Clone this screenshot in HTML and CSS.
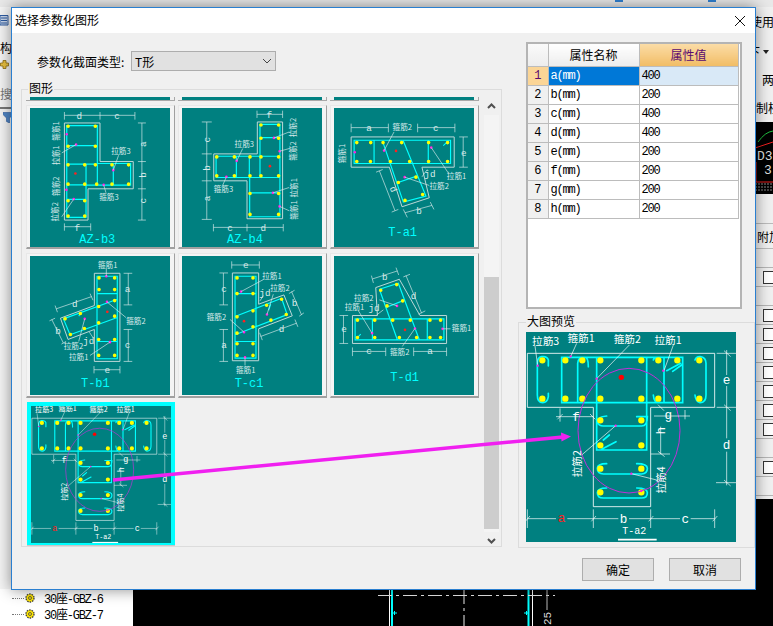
FILE: index.html
```html
<!DOCTYPE html>
<html lang="zh">
<head>
<meta charset="utf-8">
<title>选择参数化图形</title>
<link rel="stylesheet" href="styles.css">
</head>
<body>
<div class="app">
  <div class="topstrip"><i class="tb tb-a"></i><i class="tb tb-b"></i></div>
  <div class="workspace">
    <aside class="tree">
      <div class="scrap scrap-icon"><svg width="9" height="12" viewBox="0 0 9 12"><path class="ico-doc" d="M0 1.500H8V11H0Z"/><path class="ico-ln" d="M1 4H7M1 6.500H7M1 9H7"/></svg></div>
      <div class="scrap scrap-gou">构件</div>
      <div class="scrap scrap-plus"><svg width="9" height="9" viewBox="0 0 9 9"><path class="ico-plus" d="M3 .5H6V3H8.500V6H6V8.500H3V6H.5V3H3Z"/></svg></div>
      <div class="scrap scrap-sou">搜索</div>
      <div class="scrap scrap-rule"></div>
      <div class="scrap scrap-fun"><svg width="10" height="11" viewBox="0 0 10 11"><path class="ico-fun" d="M0 .5H10V2.500L6.500 6V11L3.500 9.500V6L0 2.500Z"/></svg></div>
      <div class="tree-items">
        <div class="tree-item"><i class="branch"></i><svg class="gear" width="10" height="10" viewBox="0 0 10 10"><circle class="gear-o" cx="5" cy="5" r="4"/><circle class="gear-i" cx="5" cy="5" r="1.500"/></svg><span>30座-GBZ-6</span></div>
        <div class="tree-item"><i class="branch"></i><svg class="gear" width="10" height="10" viewBox="0 0 10 10"><circle class="gear-o" cx="5" cy="5" r="4"/><circle class="gear-i" cx="5" cy="5" r="1.500"/></svg><span>30座-GBZ-7</span></div>
      </div>
    </aside>
    <main class="cad">
      <svg width="622" height="619" viewBox="133 7 622 619">
        <path class="cad-w" d="M389.500 590V626M532.500 590V626"/>
        <path class="cad-c" d="M392 590V626M528.500 590V626"/>
        <path class="cad-d" d="M378 595.500H555M464 590V626"/>
        <path class="cad-c1" d="M392 613H397M394.500 611V615M524 613H529M526.500 611V615"/>
        <path class="cad-g" d="M547 590V610"/>
        <text class="cad-t" transform="rotate(-90 551 625)" x="551" y="625">25</text>
      </svg>
    </main>
    <aside class="side">
      <div class="side-txt side-a">使用</div>
      <div class="side-txt side-b">下<i class="caret"></i></div>
      <div class="side-txt side-c">两</div>
      <div class="side-txt side-d">制柱</div>
      <div class="side-img"><svg width="18" height="72" viewBox="0 0 18 72"><path class="cad-r" d="M0 26L18 20M0 60H18M1 40V60"/><path class="cad-gn" d="M3 20Q10 10 18 9"/><path class="cad-n" d="M0 62H18M0 65H18M0 68H18"/><text class="side-cad" x="2" y="38">D3</text><text class="side-cad" x="9" y="52">3</text></svg></div>
      <div class="side-row side-tall"></div>
      <div class="side-txt side-e">附加</div>
      <div class="side-row"></div>
      <div class="side-row"><i class="chk"></i></div>
      <div class="side-row"></div>
      <div class="side-row"><i class="chk"></i></div>
      <div class="side-row"><i class="chk"></i></div>
      <div class="side-row"><i class="chk"></i></div>
      <div class="side-row"><i class="chk"></i></div>
      <div class="side-row"><i class="chk"></i></div>
      <div class="side-row"><i class="chk"></i></div>
      <div class="side-row"><i class="chk"></i></div>
      <div class="side-row"></div>
      <div class="side-row"><i class="chk"></i></div>
      <div class="side-row"></div>
    </aside>
  </div>
</div>

<section class="dialog">
  <header class="titlebar">
    <h1 class="title">选择参数化图形</h1>
    <svg class="close" width="12" height="12" viewBox="0 0 12 12"><path d="M1 1L11 11M11 1L1 11"/></svg>
  </header>
  <div class="body">
    <div class="leftcol">
      <div class="typerow">
        <span class="typelabel">参数化截面类型:</span>
        <div class="combo"><span>T形</span><svg width="10" height="6" viewBox="0 0 10 6"><path d="M1 1L5 5L9 1"/></svg></div>
      </div>
      <div class="group group-shapes">
        <div class="legend">图形</div>
        <div class="listwrap">
          <div class="thumbs">
            <div class="stub"><i></i></div><div class="stub"><i></i></div><div class="stub"><i></i></div>

            <div class="card"><svg class="pic" viewBox="90 323 420 418">
              <path class="ol" d="M193 368H300V484H400V566H264V660H193Z"/>
              <path class="rb" d="M200 376H292V490H392V555H258V652H200ZM200 436H292M200 492H292M200 554H258M258 492V554M292 492V554M340 492V554M200 598H258"/>
              <path class="dy" d="M204 378h0M286 378h0M204 438h0M286 438h0M204 494h0M254 494h0M286 494h0M336 494h0M386 494h0M204 552h0M254 552h0M290 552h0M336 552h0M386 552h0M204 602h0M254 602h0M204 648h0M254 648h0"/>
              <path class="dp" d="M200 402h0M228 433h0M340 510h0M311 554h0M199 569h0M221 597h0"/>
              <path class="dr" d="M226 520h0"/>
              <path class="dm" d="M193 345H405M193 335V358M300 335V358M405 335V358M426 368V660M414 368H438M414 484H438M414 566H438M414 660H438M193 680H272M193 670V692M272 670V692M228 433L185 458M340 510L356 465M311 554L318 578M221 597L185 650"/>
              <text class="lt" x="238" y="356">d</text><text class="lt" x="351" y="356">c</text><text class="lt" x="232" y="692">f</text>
              <text class="lt" transform="rotate(-90 437 432)" x="437" y="432">a</text><text class="lt" transform="rotate(-90 437 524)" x="437" y="524">b</text><text class="lt" transform="rotate(-90 437 602)" x="437" y="602">c</text>
              <text class="lb" x="363" y="462">拉筋3</text><text class="lb" x="327" y="600">箍筋3</text>
              <text class="lb" transform="rotate(-90 178 392)" x="178" y="392">箍筋1</text><text class="lb" transform="rotate(-90 178 465)" x="178" y="465">拉筋1</text><text class="lb" transform="rotate(-90 178 558)" x="178" y="558">箍筋2</text><text class="lb" transform="rotate(-90 174 635)" x="174" y="635">拉筋2</text>
              <text class="ti" x="292" y="730">AZ-b3</text>
            </svg></div>

            <div class="card"><svg class="pic" viewBox="546 323 420 418">
              <path class="ol" d="M772 365H848V656H741V542H641V461H772Z"/>
              <path class="rb" d="M780 372H840V650H749V532H648V468H780ZM780 412H840M780 468H840M749 532H840M709 468V532M748 468V532M780 468V532M749 578H840"/>
              <path class="dy" d="M783 374h0M836 374h0M783 414h0M836 414h0M650 470h0M703 470h0M750 470h0M783 470h0M836 470h0M650 527h0M703 527h0M750 527h0M783 527h0M836 527h0M750 580h0M836 580h0M750 643h0M836 643h0"/>
              <path class="dp" d="M822 413h0M839 453h0M710 482h0M679 530h0M819 578h0M839 619h0"/>
              <path class="dr" d="M810 498h0"/>
              <path class="dm" d="M771 342H848M771 331V353M848 331V353M620 365V658M605 365H635M605 461H635M605 542H635M605 658H635M640 682H850M640 672V694M741 672V694M850 672V694M822 413L868 395M839 453L868 445M710 482L728 445M679 530L668 555M819 578L868 562M839 619L868 632"/>
              <text class="lt" x="808" y="352">f</text><text class="lt" x="690" y="692">c</text><text class="lt" x="790" y="692">d</text>
              <text class="lt" transform="rotate(-90 631 418)" x="631" y="418">c</text><text class="lt" transform="rotate(-90 631 503)" x="631" y="503">b</text><text class="lt" transform="rotate(-90 631 595)" x="631" y="595">a</text>
              <text class="lb" x="733" y="440">拉筋3</text><text class="lb" x="670" y="576">箍筋3</text>
              <text class="lb" transform="rotate(-90 888 382)" x="888" y="382">拉筋2</text><text class="lb" transform="rotate(-90 888 452)" x="888" y="452">箍筋2</text><text class="lb" transform="rotate(-90 891 563)" x="891" y="563">拉筋1</text><text class="lb" transform="rotate(-90 891 630)" x="891" y="630">箍筋1</text>
              <text class="ti" x="735" y="730">AZ-b4</text>
            </svg></div>

            <div class="card"><svg class="pic" viewBox="42 323 420 418">
              <path class="ol" d="M93 410H403V501H306L328 593L246 620L208 501H93Z"/>
              <path class="rb" d="M102 420H392V490H102ZM162 420V490M325 420V490M250 422L318 588L250 606L188 424M232 548L290 528M370 436L386 422"/>
              <path class="dy" d="M110 427h0M152 427h0M189 427h0M245 427h0M326 427h0M383 427h0M110 484h0M151 484h0M211 484h0M269 484h0M326 484h0M383 484h0M235 547h0M288 531h0M255 601h0M308 583h0"/>
              <path class="dp" d="M104 456h0M192 451h0M334 442h0M254 531h0"/>
              <path class="dr" d="M228 452h0"/>
              <path class="dm" d="M93 382H205M93 370V396M205 370V396M293 382H405M293 370V396M405 370V396M430 410V501M418 410H444M418 501H444M178 512L225 632M168 516L188 508M215 636L235 628M255 638L336 616M250 628L262 652M331 606L342 628M192 451L222 395M334 442L385 518M254 531L328 556M306 530L322 508"/>
              <text class="lt" x="147" y="392">a</text><text class="lt" x="348" y="392">c</text><text class="lt" x="432" y="466">e</text><text class="lt" x="330" y="532">jd</text><text class="lt" x="297" y="642">b</text>
              <text class="lt" transform="rotate(68 204 574)" x="204" y="566">d</text>
              <text class="lb" x="247" y="388">箍筋2</text><text class="lb" x="410" y="536">拉筋1</text><text class="lb" x="358" y="568">拉筋2</text>
              <text class="lb" transform="rotate(-90 76 460)" x="76" y="460">箍筋1</text>
              <text class="ti" x="248" y="708">T-a1</text>
            </svg></div>

            <div class="card"><svg class="pic" viewBox="90 33 420 418">
              <path class="ol" d="M283 85H360V350H283V254L204 284L181 220L283 182Z"/>
              <path class="rb" d="M291 94H352V342H291ZM291 146H352M291 290H352M190 222L352 163M210 270L352 218M190 222L210 270M246 200L236 214"/>
              <path class="dy" d="M297 99h0M344 99h0M297 134h0M344 134h0M344 167h0M296 185h0M241 206h0M195 222h0M344 214h0M296 234h0M253 251h0M211 269h0M296 284h0M344 284h0M296 332h0M344 332h0"/>
              <path class="dp" d="M319 94h0M321 171h0M254 222h0M330 292h0"/>
              <path class="dr" d="M322 201h0"/>
              <path class="dm" d="M385 85V180M385 254V350M371 85H397M371 180H397M371 254H397M371 350H397M282 375H360M282 364V386M360 364V386M168 192L275 155M165 182L172 202M270 146L279 166M155 224L190 295M148 228L165 220M184 298L198 290M319 94V72M321 171L378 218M254 222L236 290M330 292L270 332M268 262L280 280"/>
              <text class="lt" x="383" y="142">a</text><text class="lt" x="383" y="311">c</text><text class="lt" x="322" y="384">e</text><text class="lt" x="224" y="186">d</text><text class="lt" x="174" y="268">b</text><text class="lt" x="266" y="297">jd</text>
              <text class="lb" x="323" y="70">箍筋1</text><text class="lb" x="408" y="237">箍筋2</text><text class="lb" x="220" y="313">拉筋2</text><text class="lb" x="236" y="347">拉筋1</text>
              <text class="ti" x="286" y="427">T-b1</text>
            </svg></div>

            <div class="card"><svg class="pic" viewBox="546 33 420 418">
              <path class="ol" d="M697 84H776V178L852 150L877 213L776 252V348H697Z"/>
              <path class="rb" d="M705 94H768V340H705ZM705 146H768M705 290H768M705 215L845 160M705 270L860 210M845 160L862 210M812 178L806 196"/>
              <path class="dy" d="M711 99h0M759 99h0M711 146h0M759 146h0M711 216h0M759 198h0M800 181h0M845 163h0M711 265h0M759 246h0M813 226h0M859 209h0M711 297h0M759 297h0M711 332h0M759 332h0"/>
              <path class="dp" d="M723 140h0M801 209h0M732 262h0M735 338h0"/>
              <path class="dr" d="M732 229h0"/>
              <path class="dm" d="M695 60H778M695 49V71M778 49V71M670 84V180M670 254V350M658 84H684M658 180H684M658 254H684M658 350H684M875 140L905 210M867 146L884 136M898 214L912 204M782 275L890 235M779 264L787 286M885 224L894 246M723 140L790 104M801 209L820 148M732 262L690 224M735 338V362M780 168L790 152"/>
              <text class="lt" x="737" y="69">e</text><text class="lt" x="672" y="140">c</text><text class="lt" x="672" y="311">a</text><text class="lt" x="845" y="263">d</text><text class="lt" x="884" y="183">b</text><text class="lt" x="795" y="153">jd</text>
              <text class="lb" x="816" y="103">拉筋1</text><text class="lb" x="840" y="138">拉筋2</text><text class="lb" x="649" y="225">箍筋2</text><text class="lb" x="737" y="384">箍筋1</text>
              <text class="ti" x="747" y="427">T-c1</text>
            </svg></div>

            <div class="card"><svg class="pic" viewBox="42 33 420 418">
              <path class="ol" d="M97 212H172L167 128L238 103L300 212H380V296H97Z"/>
              <path class="rb" d="M105 222H372V285H105ZM157 222V285M322 222V285M178 133L235 115L298 285M178 133L232 285M198 188L255 165M110 280L122 268"/>
              <path class="dy" d="M112 226h0M164 226h0M218 226h0M271 226h0M330 226h0M362 226h0M112 278h0M164 278h0M238 278h0M290 278h0M330 278h0M362 278h0M182 136h0M230 119h0M201 183h0M248 168h0"/>
              <path class="dp" d="M368 252h0M285 251h0M156 265h0M231 183h0"/>
              <path class="dr" d="M255 255h0"/>
              <path class="dm" d="M97 320H197M281 320H380M97 308V334M197 308V334M281 308V334M380 308V334M70 212V296M58 212H84M58 296H84M157 102L232 78M154 92L160 114M228 68L236 90M258 92L305 205M250 96L270 88M296 208L316 198M368 252H392M285 251L247 305M156 265L115 198M231 183L178 165M170 210L190 195"/>
              <text class="lt" x="147" y="329">c</text><text class="lt" x="330" y="329">a</text><text class="lt" x="72" y="263">e</text><text class="lt" x="194" y="104">b</text><text class="lt" x="281" y="161">d</text><text class="lt" x="162" y="199">jd</text>
              <text class="lb" x="131" y="168">拉筋2</text><text class="lb" x="103" y="195">拉筋1</text><text class="lb" x="425" y="259">箍筋1</text><text class="lb" x="239" y="330">箍筋2</text>
              <text class="ti" x="254" y="409">T-d1</text>
            </svg></div>

            <div class="card card-sel"><svg class="pic-sel" viewBox="48 96 630 630"><use href="#ta2" x="48" y="96" width="630" height="630"/></svg></div>
          </div>
          <div class="scrollbar">
            <svg width="9" height="6" viewBox="0 0 9 6"><path d="M1 5L4.500 1.500L8 5"/></svg>
            <div class="track"><div class="thumb"></div></div>
            <svg width="9" height="6" viewBox="0 0 9 6"><path d="M1 1L4.500 4.500L8 1"/></svg>
          </div>
        </div>
      </div>
    </div>

    <div class="rightcol">
      <div class="tablebox">
        <table class="props">
          <colgroup><col class="c-n"><col class="c-k"><col class="c-v"></colgroup>
          <thead><tr><th class="gut"></th><th>属性名称</th><th class="active">属性值</th></tr></thead>
          <tbody>
            <tr class="sel"><td class="gut">1</td><td class="key">a(mm)</td><td class="val">400</td></tr>
            <tr><td class="gut">2</td><td class="key">b(mm)</td><td class="val">200</td></tr>
            <tr><td class="gut">3</td><td class="key">c(mm)</td><td class="val">400</td></tr>
            <tr><td class="gut">4</td><td class="key">d(mm)</td><td class="val">400</td></tr>
            <tr><td class="gut">5</td><td class="key">e(mm)</td><td class="val">200</td></tr>
            <tr><td class="gut">6</td><td class="key">f(mm)</td><td class="val">200</td></tr>
            <tr><td class="gut">7</td><td class="key">g(mm)</td><td class="val">200</td></tr>
            <tr><td class="gut">8</td><td class="key">h(mm)</td><td class="val">200</td></tr>
          </tbody>
        </table>
      </div>
      <div class="group group-preview">
        <div class="legend">大图预览</div>
        <svg class="preview" viewBox="48 96 630 630">
          <symbol id="ta2" viewBox="48 96 630 630">
            <rect class="tealbg" x="48" y="96" width="630" height="630"/>
            <path class="wh" d="M52 160H614V322H422V620H250V322H52Z"/>
            <path class="rbb" d="M100 170Q112 170 115 180V198M98 170H95Q82 172 82 190V285Q82 308 98 308Q112 308 115 290V280M155 308V172H518V308ZM203 308V190Q203 172 225 172Q235 172 235 200M260 172V450H410V172M430 180Q432 172 445 172M462 172V308M430 285Q432 308 445 308M470 212L512 190M488 214L515 195M555 180Q558 170 570 170Q588 172 588 190V285Q588 308 570 308Q557 305 555 285M290 348Q262 350 262 365Q265 378 280 378H395Q412 378 412 350H380M275 448L318 425M280 420L298 405M290 491Q262 491 262 505Q262 522 280 522H395Q412 522 412 505Q412 491 380 491M290 564Q262 564 262 578Q262 594 280 594H395Q412 594 412 578Q412 564 380 564"/>
            <path class="dyb" d="M97 181h0M97 296h0M166 181h0M166 296h0M217 181h0M217 296h0M271 181h0M271 296h0M394 181h0M394 296h0M445 181h0M445 296h0M502 181h0M502 296h0M568 181h0M568 296h0M271 361h0M394 361h0M271 436h0M394 436h0M271 506h0M394 506h0M271 577h0M394 577h0"/>
            <ellipse class="ell" cx="357" cy="392" rx="153" ry="187"/>
            <path class="wt" d="M620 160H678M620 322H678M650 150V225M650 258V415M650 455V556M618 548H678M642 152L662 170M642 314L662 332M642 540L662 558M422 462H480M452 380V462M444 454L464 470M432 348H540M525 330V358M444 314L462 332M138 350H250M150 325V365M142 358L158 342M240 342L256 358M52 656H138M172 656H325M357 656H510M542 656H614M52 628V684M250 628V684M422 628V684M614 628V684M46 664L60 648M244 664L258 648M416 664L430 648M608 664L622 648M75 138L83 197M200 130L182 170M358 135L260 236M490 135L462 212M317 377L215 465M364 521L440 540"/>
            <path class="ul" d="M324 719H440"/>
            <path class="dpb" d="M83 197h0M182 169h0M260 236h0M460 212h0M317 377h0M364 521h0M394 573h0"/>
            <path class="drb" d="M334 232h0"/>
            <text class="bl" x="650" y="252">e</text><text class="bl" x="650" y="446">d</text><text class="bl" x="198" y="362">f</text><text class="bl" x="475" y="358">g</text><text class="bl" x="341" y="668">b</text><text class="bl" x="526" y="668">c</text><text class="bl bl-red" x="155" y="666">a</text>
            <text class="bl" transform="rotate(-90 465 392)" x="465" y="392">h</text>
            <text class="bc" x="107" y="134">拉筋3</text><text class="bc" x="213" y="127">箍筋1</text><text class="bc" x="352" y="130">箍筋2</text><text class="bc" x="474" y="132">拉筋1</text>
            <text class="bc" transform="rotate(-90 212 491)" x="212" y="491">拉筋2</text><text class="bc" transform="rotate(-90 464 540)" x="464" y="540">拉筋4</text>
            <text class="bt" x="373" y="703">T-a2</text>
          </symbol>
          <use href="#ta2" x="48" y="96" width="630" height="630"/>
        </svg>
      </div>
    </div>
  </div>
  <footer class="footer">
    <button class="btn" type="button">确定</button>
    <button class="btn" type="button">取消</button>
  </footer>
</section>

<svg class="arrow" width="773" height="626" viewBox="0 0 773 626">
  <path class="arrow-line" d="M113 480L563 437"/>
  <path class="arrow-head" d="M561 432.500L571 436.500L561.500 441.500Z"/>
</svg>
</body>
</html>
```
FILE: styles.css
```css
* { box-sizing: border-box; }
html, body { margin: 0; padding: 0; }
body {
  position: relative;
  width: 773px;
  height: 626px;
  overflow: hidden;
  background: #000;
  font-family: "Noto Sans CJK SC", "Liberation Sans", sans-serif;
  font-size: 12px;
  color: #000;
}

/* Backdrop application */
.app { display: flex; flex-direction: column; width: 773px; height: 626px; }
.topstrip { position: relative; height: 7px; background: #e8e8e8; flex: none; }
.tb { position: absolute; top: 0; height: 2px; width: 8px; background: #2f7fd0; }
.tb-a { left: 615px; }
.tb-b { left: 708px; }
.workspace { display: flex; flex: 1; min-height: 0; }

.tree {
  width: 133px;
  flex: none;
  display: flex;
  flex-direction: column;
  background: #f4f4f4;
  overflow: hidden;
}
.scrap { flex: none; line-height: 14px; white-space: nowrap; }
.scrap-icon { height: 12px; margin-top: 7px; line-height: 0; }
.scrap-gou { margin-top: 15px; height: 14px; }
.scrap-plus { margin-top: 5px; height: 9px; padding-left: 0; line-height: 0; }
.scrap-sou { margin-top: 18px; height: 14px; color: #777; }
.scrap-rule { margin-top: 6px; height: 2px; background: #777; }
.scrap-fun { margin-top: 3px; height: 11px; padding-left: 3px; line-height: 0; }
.ico-doc { fill: #c9d6ea; stroke: #2c5aa0; }
.ico-ln { stroke: #2c5aa0; fill: none; }
.ico-plus { fill: #e8c040; stroke: #8a6a10; stroke-width: .8; }
.ico-fun { fill: #4f86c6; stroke: #2c5aa0; stroke-width: .6; }

.tree-items { margin-top: auto; height: 37px; background: #fff; padding-top: 1px; border-left: 0; }
.tree-item { display: flex; align-items: center; height: 16px; padding-left: 12px; white-space: nowrap; font-family: "Liberation Mono", "Noto Sans CJK SC", monospace; letter-spacing: -1.2px; }
.branch { width: 12px; height: 1px; border-top: 1px dotted #777; flex: none; }
.gear { flex: none; margin-left: 1px; margin-right: 9px; }
.gear-o { fill: #ffe600; stroke: #444; stroke-width: 1.4; stroke-dasharray: 1.500 1; }
.gear-i { fill: #ffe600; stroke: #444; stroke-width: .8; }

.cad { flex: 1; min-width: 0; background: #000; line-height: 0; }
.cad-w { stroke: #fff; stroke-width: 1; fill: none; }
.cad-c { stroke: #00ffff; stroke-width: 2; fill: none; }
.cad-c1 { stroke: #00ffff; stroke-width: 1; fill: none; }
.cad-d { stroke: #eee; stroke-width: 1; stroke-dasharray: 14 4 3 4; fill: none; }
.cad-g { stroke: #bbb; fill: none; }
.cad-t { fill: #ddd; font: 11px "Liberation Mono", monospace; }

.side {
  width: 18px;
  flex: none;
  height: 492px;
  background: #f0f0f0;
  overflow: hidden;
}
.side-txt { height: 14px; line-height: 14px; white-space: nowrap; }
.side-a { margin-top: 8px; margin-left: -5px; }
.side-b { margin-top: 16px; margin-left: -7px; display: flex; align-items: center; }
.caret { display: block; width: 0; height: 0; margin-left: 3px; border: solid transparent; border-width: 4px 3px 0; border-top-color: #222; }
.side-c { margin-top: 14px; padding-left: 7px; }
.side-d { margin-top: 14px; padding-left: 1px; }
.side-img { height: 72px; margin-top: 7px; background: #000; line-height: 0; }
.cad-r { stroke: #f02020; fill: none; }
.cad-gn { stroke: #20c040; fill: none; }
.cad-n { stroke: #8a8a8a; stroke-dasharray: 2 1; fill: none; }
.side-cad { fill: #ddd; font: 13px "Liberation Mono", monospace; }
.side-row { height: 19px; border-bottom: 1px solid #b5b5b5; display: flex; align-items: center; padding-left: 8px; }
.side-row.side-tall { height: 30px; border-bottom: 1px solid #bbb; }
.side-txt.side-e { height: 25px; line-height: 25px; padding-left: 2px; border-bottom: 1px solid #bbb; }
.chk { display: block; width: 14px; height: 13px; flex: none; border: 1px solid #333; background: #fff; }

/* Dialog window */
.dialog {
  position: absolute;
  left: 11px;
  top: 7px;
  width: 745px;
  height: 583px;
  display: flex;
  flex-direction: column;
  background: #f0f0f0;
  border: 1px solid #2a7fd0;
  box-shadow: 0 0 14px rgba(0, 0, 0, .45);
}
.titlebar { display: flex; align-items: center; justify-content: space-between; height: 25px; flex: none; background: #fff; padding: 0 9px 2px 3px; }
.title { margin: 0; font-size: 12px; font-weight: 400; line-height: 14px; }
.close { fill: none; stroke: #111; stroke-width: 1; margin-top: 2px; }
.body { display: flex; flex: none; height: 514px; }
.leftcol { width: 490px; padding-left: 9px; flex: none; margin-right: 16px; }
.typerow { display: flex; align-items: center; height: 20px; margin-top: 18px; padding-left: 16px; }
.typelabel { width: 94px; flex: none; white-space: nowrap; }
.combo {
  display: flex;
  align-items: center;
  justify-content: space-between;
  width: 145px;
  height: 20px;
  padding: 0 3px 0 3px;
  background: #e1e1e1;
  border: 1px solid #adadad;
}
.combo svg { fill: none; stroke: #444; stroke-width: 1; }
.group { border: 1px solid #dcdcdc; }
.group-shapes { width: 481px; height: 458px; margin-top: 18px; padding-left: 4px; }
.legend {
  width: fit-content;
  height: 14px;
  line-height: 14px;
  margin: -9px 0 2px 2px;
  padding: 0 1px;
  background: #f0f0f0;
  white-space: nowrap;
}
.listwrap { display: flex; height: 450px; }
.thumbs {
  width: 458px;
  flex: none;
  display: grid;
  grid-template-columns: repeat(3, 149px);
  grid-template-rows: 4px 144px 145px 143px;
  column-gap: 3px;
  row-gap: 4px;
  align-content: start;
}
.stub { padding: 0 4px; border-bottom: 1px solid #a8a8a8; border-right: 1px solid #a8a8a8; }
.stub i { display: block; height: 3px; background: #008080; }
.card {
  padding: 2px 0 0 3px;
  background: #f4f4f4;
  border: 1px solid #e8e8e8;
  border-right-color: #a0a0a0;
  border-bottom-color: #a0a0a0;
  border-bottom-width: 2px;
  line-height: 0;
}
.pic { display: block; width: 140px; height: 139px; background: #008080; }
.card.card-sel {
  width: 148px;
  padding: 0;
  margin-left: 1px;
  overflow: hidden;
  background: #008080;
  border: solid #00ffff;
  border-width: 4px 4px 2px 4px;
  box-shadow: 0 1px 0 #c8c8c8;
}
.pic-sel { display: block; width: 140px; height: 140px; margin-top: -2px; }
.ol { fill: none; stroke: #bcd8d8; stroke-width: 3; }
.rb { fill: none; stroke: #00ffff; stroke-width: 3.5; }
.dy, .dp, .dr { fill: none; stroke-linecap: round; }
.dy { stroke: #ffff00; stroke-width: 11; }
.dp { stroke: #ff20e0; stroke-width: 8; }
.dr { stroke: #ff2020; stroke-width: 8; }
.dm { fill: none; stroke: #d8eaea; stroke-width: 2; }
.lb, .lt, .ti { text-anchor: middle; }
.lb { fill: #d8eaea; font-size: 23px; font-family: "Noto Sans CJK SC", sans-serif; }
.lt { fill: #d8eaea; font-size: 28px; font-family: "Liberation Mono", monospace; }
.ti { fill: #00ffff; font-size: 36px; font-family: "Liberation Mono", monospace; }

.scrollbar { width: 15px; display: flex; flex-direction: column; align-items: center; flex: none; }
.scrollbar svg { flex: none; fill: none; stroke: #505050; stroke-width: 2; margin: 6px 0; }
.track { flex: 1; width: 100%; background: #f4f4f4; padding-top: 162px; padding-bottom: 3px; }
.thumb { height: 252px; background: #cdcdcd; }

.rightcol { width: 237px; flex: none; }
.tablebox { width: 216px; height: 267px; margin: 9px 0 0 8px; background: #fff; border: 2px solid #b4b4b4; }
.props { width: 210px; border-collapse: collapse; table-layout: fixed; font-size: 12px; }
.c-n { width: 20px; }
.c-k { width: 91px; }
.c-v { width: 99px; }
.props th, .props td { padding: 0; border: 1px solid #bcbcbc; white-space: nowrap; overflow: hidden; }
.props th { height: 22px; padding-bottom: 1px; font-weight: 400; text-align: center; background: linear-gradient(#ffffff, #ededed); border-top: 0; border-left: 0; }
.props th.gut { background: linear-gradient(#fafafa, #ededed); }
.props th.active { color: #5a0a70; background: linear-gradient(#fbdca6, #f1bd66); }
.props td { height: 19px; line-height: 17px; padding-top: 1px; }
.props td.gut { text-align: center; background: #f0f0f0; border-left: 0; font-family: "Liberation Mono", monospace; }
.props td.key, .props td.val { padding-left: 2px; font-family: "Liberation Mono", monospace; letter-spacing: -1.2px; }
.props tr.sel td.gut { background: #fbd596; color: #5a0a70; }
.props tr.sel td.key { background: #0078d7; color: #fff; }
.props tr.sel td.val { background: #d9e9f7; }
.group-preview { height: 226px; margin-top: 13px; padding-left: 7px; }
.group-preview .legend { margin-left: 0; }
.preview { display: block; width: 210px; height: 210px; margin-top: 4px; }
.tealbg { fill: #008080; }
.wh { fill: none; stroke: #fff; stroke-width: 2.5; }
.wt { fill: none; stroke: #fff; stroke-width: 2; }
.rbb { fill: none; stroke: #00ffff; stroke-width: 5; stroke-linecap: round; }
.ell { fill: none; stroke: #c030d8; stroke-width: 3; }
.dyb, .dpb, .drb { fill: none; stroke-linecap: round; }
.dyb { stroke: #ffff00; stroke-width: 19; }
.dpb { stroke: #ff20e0; stroke-width: 7; }
.drb { stroke: #ff0000; stroke-width: 16; }
.ul { stroke: #fff; stroke-width: 5; fill: none; }
.bl, .bc, .bt { text-anchor: middle; }
.bl { fill: #fff; font-size: 38px; font-family: "Liberation Mono", monospace; }
.bl-red { fill: #ff2020; }
.bc { fill: #fff; font-size: 32px; font-family: "Noto Sans CJK SC", sans-serif; }
.bt { fill: #fff; font-size: 30px; font-family: "Liberation Mono", monospace; }

.footer { display: flex; justify-content: flex-end; gap: 15px; padding: 11px 14px 0 0; }
.btn {
  width: 72px;
  height: 23px;
  padding: 0;
  background: #e1e1e1;
  border: 1px solid #adadad;
  font: 12px "Noto Sans CJK SC", sans-serif;
  color: #000;
}

/* Pink annotation drawn over the screenshot */
.arrow { position: absolute; left: 0; top: 0; pointer-events: none; }
.arrow-line { stroke: #f020f0; stroke-width: 3.5; fill: none; }
.arrow-head { fill: #f020f0; }
```
